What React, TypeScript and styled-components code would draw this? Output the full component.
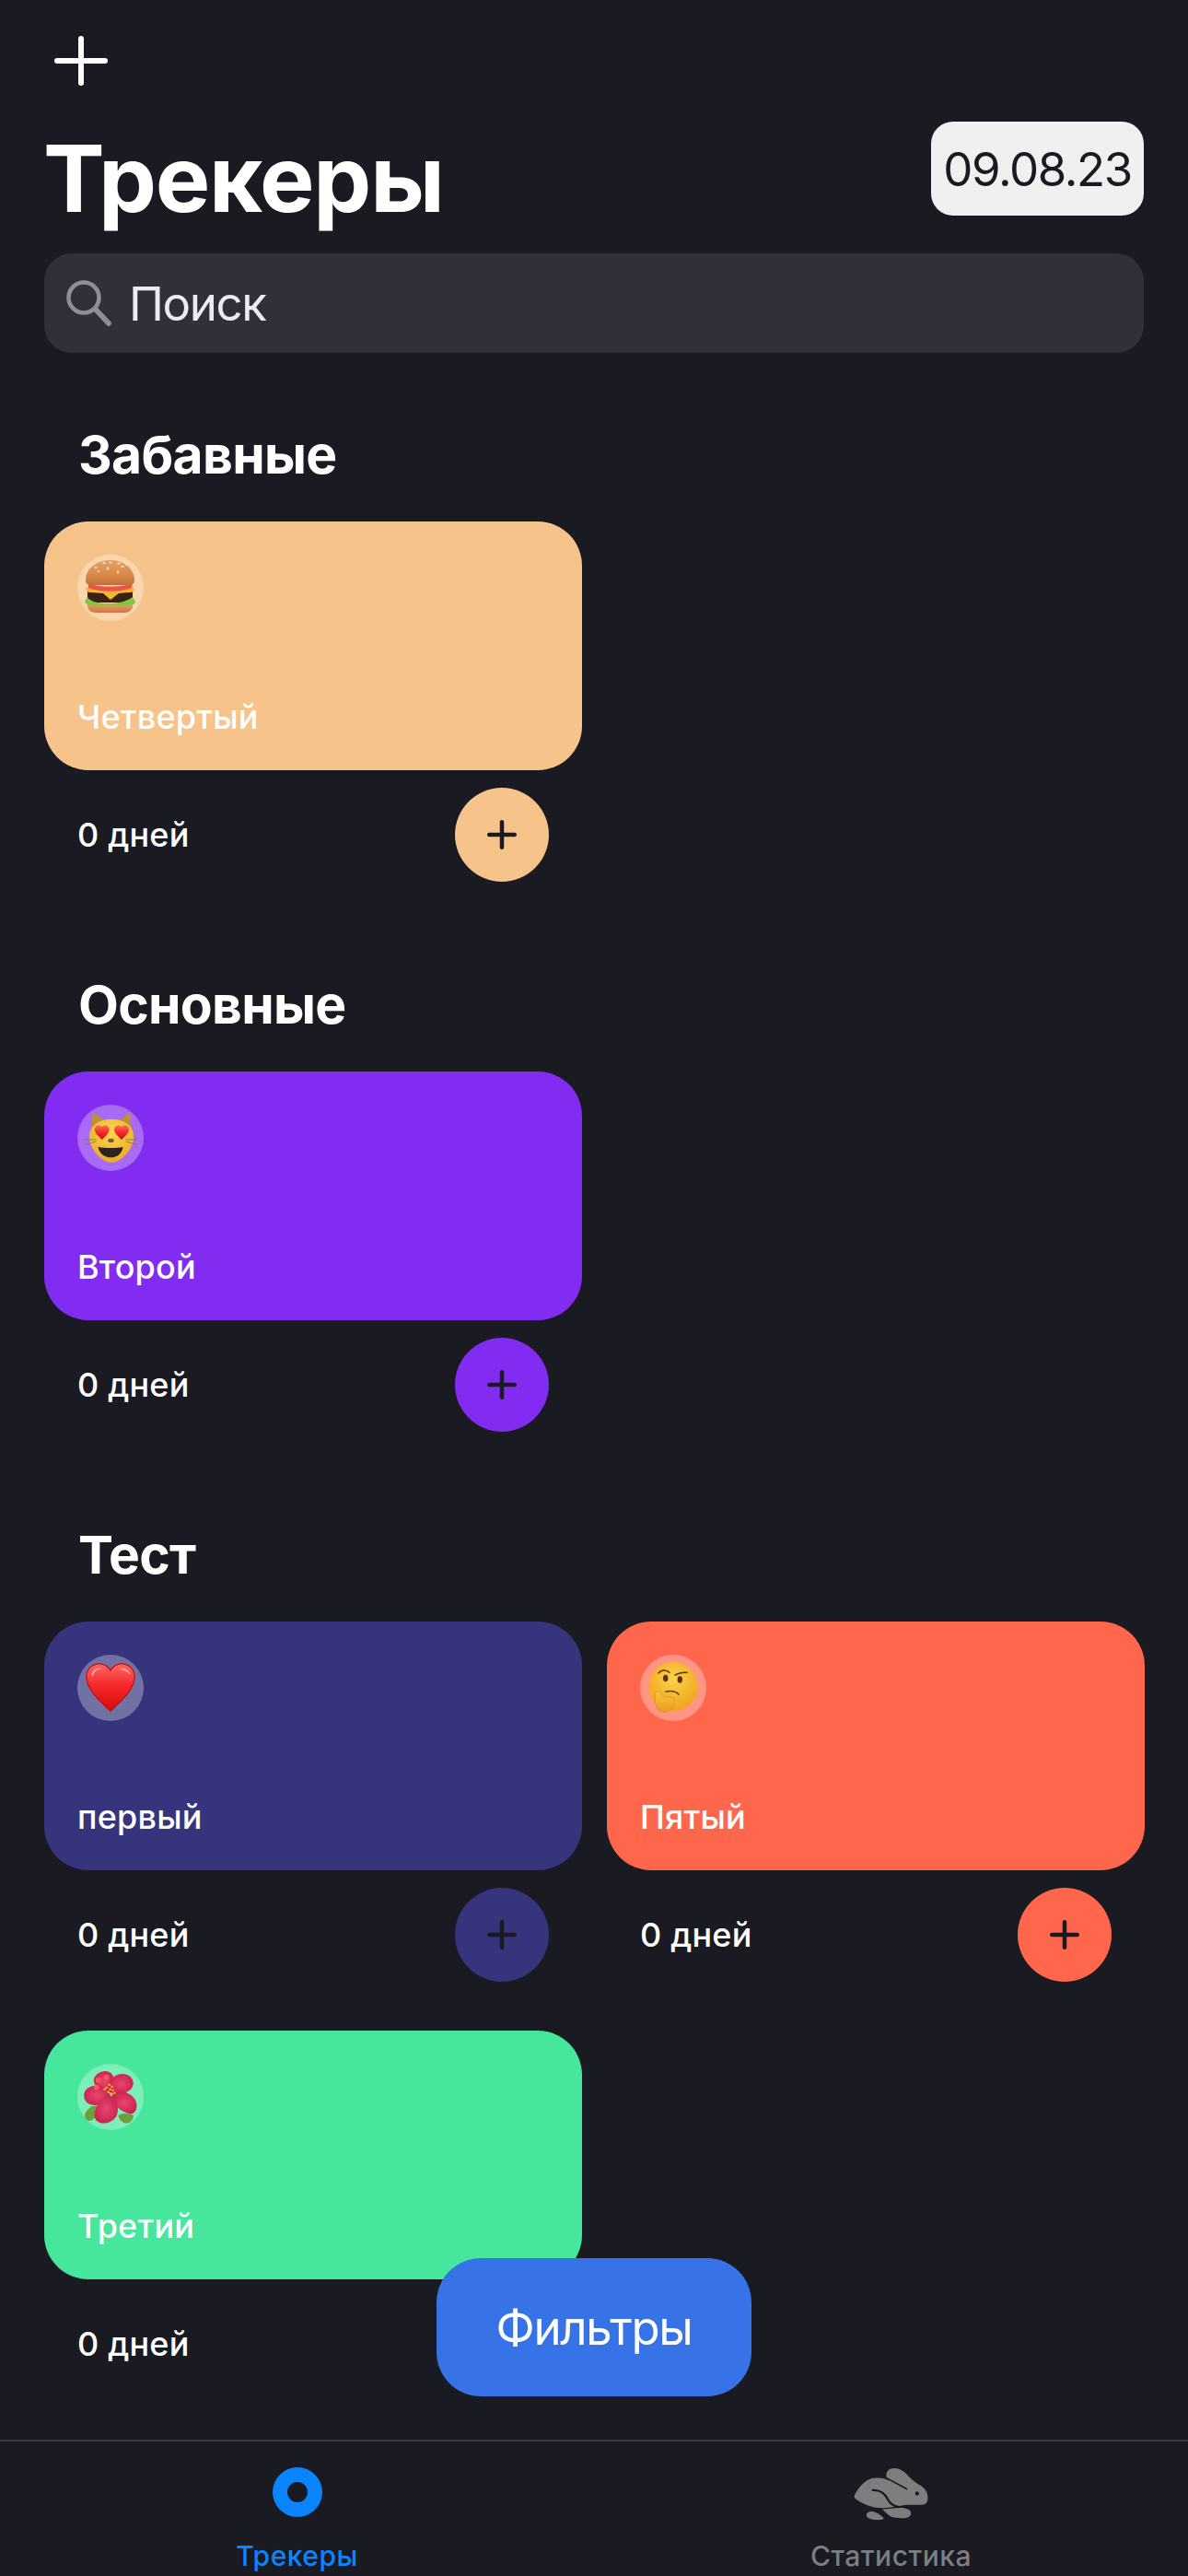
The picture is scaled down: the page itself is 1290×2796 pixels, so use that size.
import React from "react";
import styled, { createGlobalStyle } from "styled-components";

const Global = createGlobalStyle`
  html, body { margin: 0; padding: 0; background: #1a1b22; }
  * { box-sizing: border-box; }
`;

const Page = styled.div`
  position: relative;
  width: 1290px;
  height: 2796px;
  overflow: hidden;
  display: flex;
  flex-direction: column;
  background: #1a1b22;
  font-family: Inter, "Noto Sans", sans-serif;
  color: #fff;
`;
const Header = styled.header`
  display: flex;
  flex-direction: column;
  padding: 39px 48px 0;
`;
const AddButton = styled.button`
  display: block;
  width: 58px;
  height: 54px;
  margin-left: 11px;
  padding: 0;
  border: 0;
  background: none;
  svg { display: block; }
`;
const TitleRow = styled.div`
  display: flex;
  justify-content: space-between;
  align-items: flex-start;
  margin-top: 39px;
`;
const Title = styled.h1`
  margin: 0 0 0 -1px;
  font-size: 100px;
  line-height: 124px;
  font-weight: 700;
  letter-spacing: -1.2px;
`;
const DatePill = styled.div`
  width: 231px;
  height: 102px;
  border-radius: 24px;
  background: #f0f0f0;
  color: #1a1b22;
  font-size: 51px;
  letter-spacing: -1.4px;
  display: flex;
  align-items: center;
  justify-content: center;
`;
const Search = styled.div`
  height: 108px;
  margin-top: 19px;
  border-radius: 30px;
  background: #30303a;
  display: flex;
  align-items: center;
  padding-left: 24px;
  gap: 18px;
  font-size: 51px;
  letter-spacing: -1.4px;
  color: #ebebf5;
  svg { display: block; flex: none; }
`;
const Main = styled.main`
  flex: 1;
  display: flex;
  flex-direction: column;
  gap: 100px;
  padding: 77px 47px 0 48px;
`;
const Section = styled.section`
  display: flex;
  flex-direction: column;
`;
const SectionTitle = styled.h2`
  margin: 0 0 38px 37px;
  font-size: 57px;
  line-height: 68px;
  font-weight: 700;
  letter-spacing: -0.7px;
`;
const Grid = styled.div`
  display: grid;
  grid-template-columns: 584px 584px;
  column-gap: 27px;
  row-gap: 53px;
`;
const Tracker = styled.article`
  display: flex;
  flex-direction: column;
`;
const Card = styled.div<{ $color: string }>`
  height: 270px;
  border-radius: 48px;
  background: ${(p) => p.$color};
  padding: 36px;
  display: flex;
  flex-direction: column;
  justify-content: space-between;
`;
const EmojiBadge = styled.div<{ $x: number; $y: number }>`
  position: relative;
  width: 72px;
  height: 72px;
  border-radius: 50%;
  background: rgba(255, 255, 255, 0.3);
  svg {
    position: absolute;
    left: ${(p) => p.$x}px;
    top: ${(p) => p.$y}px;
    display: block;
    overflow: visible;
  }
`;
const CardName = styled.div`
  font-size: 36px;
  line-height: 44px;
  font-weight: 500;
  letter-spacing: 0.2px;
`;
const Footer = styled.div`
  margin-top: 19px;
  padding: 0 36px;
  display: flex;
  align-items: center;
  justify-content: space-between;
`;
const Days = styled.div`
  font-size: 36px;
  font-weight: 500;
  letter-spacing: 0.2px;
`;
const PlusRound = styled.button<{ $color: string }>`
  width: 102px;
  height: 102px;
  padding: 0;
  border: 0;
  border-radius: 50%;
  background: ${(p) => p.$color};
  display: flex;
  align-items: center;
  justify-content: center;
  svg { display: block; }
`;
const FilterButton = styled.button`
  position: absolute;
  left: 474px;
  top: 2451px;
  width: 342px;
  height: 150px;
  border: 0;
  border-radius: 48px;
  background: #3772e7;
  color: #fff;
  font-family: inherit;
  font-size: 51px;
  letter-spacing: -1.4px;
`;
const TabBar = styled.nav`
  height: 148px;
  border-top: 2px solid #39393d;
  display: grid;
  grid-template-columns: 1fr 1fr;
  background: #1a1b22;
`;
const Tab = styled.div<{ $active?: boolean }>`
  display: flex;
  flex-direction: column;
  align-items: center;
  padding-top: 28px;
  color: ${(p) => (p.$active ? "#0a84ff" : "#7e7e7e")};
  svg { display: block; }
`;
const TabIcon = styled.div`
  height: 58px;
  display: flex;
  align-items: flex-start;
`;
const TabLabel = styled.div`
  margin-top: 20px;
  font-size: 30px;
  line-height: 36px;
  font-weight: 500;
  letter-spacing: 0.5px;
`;

const Plus = ({ size, color, w }: { size: number; color: string; w: number }) => (
  <svg width={size} height={size} viewBox={`0 0 ${size} ${size}`}>
    <path
      d={`M${size / 2} ${w / 2}V${size - w / 2}M${w / 2} ${size / 2}H${size - w / 2}`}
      stroke={color}
      strokeWidth={w}
      strokeLinecap="round"
    />
  </svg>
);

const Burger = () => (
  <svg width="55" height="57" viewBox="0 0 55 57">
    <defs>
      <linearGradient id="bun" x1="0" y1="0" x2="0" y2="1">
        <stop offset="0" stopColor="#e4a267" />
        <stop offset="0.55" stopColor="#dc8b4b" />
        <stop offset="1" stopColor="#c27039" />
      </linearGradient>
      <linearGradient id="bunb" x1="0" y1="0" x2="0" y2="1">
        <stop offset="0" stopColor="#eaa066" />
        <stop offset="1" stopColor="#cc7843" />
      </linearGradient>
    </defs>
    <path d="M3 47 L52 47 C53 53 49 57 43 57 L12 57 C6 57 2 53 3 47Z" fill="url(#bunb)" />
    <path d="M3 31 L52 31 L52 46 L3 46Z" fill="#3c2016" />
    <path d="M1 30 C14 28 41 28 54 30 C54 34 52 35 48 35 L37 36 L28 43 L20 36 L7 35 C3 35 1 33 1 30Z" fill="#f6b62f" />
    <path d="M4 25 C15 30 40 30 52 25 L51 30 C40 35 15 35 4 30Z" fill="#ea5350" />
    <path d="M0 45 L3 40 C5 44 12 46 20 47 C30 48 44 46 52 40 L55 45 C54 48 52 49 49 48 C47 50 44 50 42 48 C40 50 37 50 35 48 C33 50 30 50 28 48 C26 50 23 50 21 48 C19 50 16 50 14 48 C12 50 9 50 7 48 C4 49 1 48 0 45Z" fill="#80c93f" />
    <path d="M1 22 C1 8 14 0 28 0 C41 0 54 8 54 22 C54 26 51 27 48 27 L7 27 C4 27 1 26 1 22Z" fill="url(#bun)" />
    <g fill="#f3e3c5">
      <ellipse cx="12" cy="8" rx="1.8" ry="1" />
      <ellipse cx="21" cy="3" rx="1.8" ry="1" />
      <ellipse cx="28" cy="2.5" rx="1.6" ry="1" />
      <ellipse cx="37" cy="3.5" rx="1.8" ry="1" />
      <ellipse cx="25" cy="9" rx="1.1" ry="1.8" />
      <ellipse cx="36" cy="13" rx="1.1" ry="1.8" />
      <ellipse cx="41" cy="7" rx="1.8" ry="1" />
      <ellipse cx="45" cy="4.5" rx="1.2" ry="0.9" />
      <ellipse cx="15" cy="12" rx="1.2" ry="0.9" />
    </g>
  </svg>
);

const Heart = ({ x = 0, y = 0, s = 1, id }: { x?: number; y?: number; s?: number; id: string }) => (
  <g transform={`translate(${x} ${y}) scale(${s})`}>
    <defs>
      <linearGradient id={id} x1="0" y1="0" x2="0" y2="1">
        <stop offset="0" stopColor="#ff6a66" />
        <stop offset="0.45" stopColor="#f52a2a" />
        <stop offset="1" stopColor="#d90a0a" />
      </linearGradient>
    </defs>
    <path d="M30 57 C20 47 2 33 2 17 C2 8 9 2 17 2 C23 2 27 5 30 10 C33 5 37 2 43 2 C51 2 58 8 58 17 C58 33 40 47 30 57Z" fill={`url(#${id})`} stroke="#c70808" strokeWidth="1.2" />
  </g>
);

const HeartEmoji = () => (
  <svg width="56" height="56" viewBox="0 0 60 60">
    <Heart id="bigheart" />
    <path d="M8 14 C10 8 16 6 20 8 C14 8 11 11 9 17Z" fill="#ffc4c0" opacity="0.8" />
    <path d="M40 8 C46 6 52 9 53 15 C50 11 46 9 40 8Z" fill="#ffc4c0" opacity="0.8" />
  </svg>
);

const Cat = () => (
  <svg width="58" height="56" viewBox="0 0 60 58">
    <defs>
      <radialGradient id="catf" cx="0.5" cy="0.3" r="0.8">
        <stop offset="0" stopColor="#fbd750" />
        <stop offset="1" stopColor="#e8a31f" />
      </radialGradient>
    </defs>
    <path d="M9 0 L23 10 L38 10 L51 0 L53 26 L7 26Z" fill="#bf9136" />
    <path d="M5 28 C5 15 16 8 30 8 C44 8 55 15 55 28 C55 42 40 57 30 57 C20 57 5 42 5 28Z" fill="url(#catf)" />
    <Heart id="cateye1" x={11} y={15} s={0.28} />
    <Heart id="cateye2" x={33} y={15} s={0.28} />
    <ellipse cx="29.5" cy="32" rx="3.4" ry="2.3" fill="#7a5a3a" />
    <path d="M15 39 C23 41 36 41 43 39 C42 47 36 51 29.5 51 C23 51 16 47 15 39Z" fill="#2a2320" />
    <path d="M0 37 L13 33 M0 31 L13 31 M46 31 L59 31 M46 33 L59 37" stroke="#8d7132" strokeWidth="0.8" />
  </svg>
);

const Thinking = () => (
  <svg width="54" height="55" viewBox="0 0 54 55">
    <defs>
      <radialGradient id="thf" cx="0.5" cy="0.35" r="0.75">
        <stop offset="0" stopColor="#fcd24a" />
        <stop offset="1" stopColor="#ee9c15" />
      </radialGradient>
      <linearGradient id="thh" x1="0" y1="0" x2="0" y2="1">
        <stop offset="0" stopColor="#fbc43f" />
        <stop offset="1" stopColor="#ec9a1f" />
      </linearGradient>
    </defs>
    <circle cx="27" cy="26.5" r="26.5" fill="url(#thf)" />
    <path d="M11 12 C14 8 20 8 23 11.5" stroke="#5a3210" strokeWidth="1.5" fill="none" strokeLinecap="round" />
    <path d="M29 14 C33 12 38 11 42 11.5" stroke="#5a3210" strokeWidth="1.5" fill="none" strokeLinecap="round" />
    <ellipse cx="18.7" cy="17.5" rx="2.7" ry="3.8" fill="#5a3210" />
    <ellipse cx="34.3" cy="19" rx="2.7" ry="3.8" fill="#5a3210" />
    <path d="M19 32 C24 31 30 32 33 35" stroke="#6a3c12" strokeWidth="1.7" fill="none" strokeLinecap="round" />
    <path d="M8 33 C10 31 13 32 14 35 C15 38 19 37 25 38 C30 39 29 42 27 43 C29 44 28 47 26 47.5 C27 49 26 51 24 51.5 C21 55 14 55 11 52 C7 47 6 38 8 33Z" fill="url(#thh)" stroke="#d98a17" strokeWidth="0.7" />
  </svg>
);

const Hibiscus = () => (
  <svg width="59" height="59" viewBox="0 0 60 60">
    <defs>
      <radialGradient id="pet" cx="0.5" cy="0.5" r="0.62">
        <stop offset="0" stopColor="#e9466f" />
        <stop offset="1" stopColor="#c51d4c" />
      </radialGradient>
    </defs>
    <path d="M1 50 C3 42 10 38 15 40 C16 50 10 56 6 56 C3 55 1 53 1 50Z" fill="#6ea03a" />
    <path d="M38 50 C44 46 52 48 55 50 C54 56 50 60 44 58 C41 56 39 54 38 50Z" fill="#6ea03a" />
    <path d="M11 10 C13 3 22 -1 28 2 C34 5 35 14 31 24 C24 26 10 20 11 10Z" fill="url(#pet)" />
    <path d="M28 14 C31 6 40 2 48 5 C56 9 56 16 52 21 C46 26 36 28 28 24Z" fill="url(#pet)" />
    <path d="M27 22 C20 16 8 15 2 22 C-2 28 1 36 8 38 C16 41 26 34 29 27Z" fill="url(#pet)" />
    <path d="M31 26 C40 21 52 24 57 33 C61 42 56 50 50 48 C41 46 31 38 31 26Z" fill="url(#pet)" />
    <path d="M28 27 C35 31 39 39 37 48 C35 56 25 60 18 58 C12 56 10 50 13 43 C16 35 22 29 28 27Z" fill="url(#pet)" />
    <circle cx="16" cy="11" r="3" fill="#f65a54" />
    <circle cx="25" cy="8" r="3" fill="#f65a54" />
    <circle cx="14" cy="19" r="3" fill="#f65a54" />
    <g fill="#f4c21a">
      <rect x="24" y="18" width="2.2" height="2.2" />
      <rect x="27" y="15" width="2.2" height="2.2" />
      <rect x="30" y="17" width="2.2" height="2.2" />
      <rect x="28" y="20" width="2.2" height="2.2" />
      <rect x="22" y="20" width="2.2" height="2.2" />
      <rect x="31" y="21" width="2.2" height="2.2" />
      <rect x="26" y="23" width="2.2" height="2.2" />
      <rect x="30" y="25" width="2.2" height="2.2" />
      <rect x="33" y="24" width="2.2" height="2.2" />
    </g>
  </svg>
);

const SearchIcon = () => (
  <svg width="50" height="50" viewBox="0 0 50 50" fill="none" stroke="#8e8e93">
    <circle cx="19" cy="19" r="16.5" strokeWidth="4.6" />
    <path d="M32 32 L46 47" strokeWidth="5.6" strokeLinecap="round" />
  </svg>
);

const TrackersIcon = () => (
  <svg width="54" height="54" viewBox="0 0 54 54">
    <path fillRule="evenodd" fill="#0a84ff" d="M27 0a27 27 0 1 0 0 54a27 27 0 1 0 0-54Zm0 16a11 11 0 1 1 0 22a11 11 0 1 1 0-22Z" />
  </svg>
);

const RabbitIcon = () => (
  <svg width="81" height="58" viewBox="143 113 243 175">
    <path
      fill="#7e7e7e"
      d="M145 205 C155 185 180 148 215 148 C235 147 245 150 258 158 C248 148 246 134 254 124 C264 112 292 112 312 132 C330 152 345 164 360 172 C378 182 386 198 385 216 C384 232 374 237 360 236 L318 236 C306 236 296 240 286 241 C270 243 240 248 222 246 C190 242 165 228 150 218 C145 214 143 210 145 205Z"
    />
    <path fill="#7e7e7e" d="M236 250 C254 248 272 248 290 246 C312 244 330 252 330 264 C330 276 316 281 300 280 C280 279 264 278 254 268 C248 262 242 256 236 250Z" />
    <path fill="#7e7e7e" d="M196 258 C210 256 222 262 240 278 C243 284 230 286 218 285 C202 285 184 280 184 270 C184 263 190 259 196 258Z" />
    <path d="M205 188 C232 186 246 202 254 218 C260 230 270 240 290 243" stroke="#1a1b22" strokeWidth="7" strokeLinecap="round" fill="none" />
    <path d="M244 145 L316 184" stroke="#1a1b22" strokeWidth="5" strokeLinecap="round" />
    <circle cx="350" cy="199" r="6.5" fill="#1a1b22" />
  </svg>
);

type T = { name: string; color: string; emoji: React.ReactNode; x: number; y: number };

const sections: { title: string; items: T[] }[] = [
  { title: "Забавные", items: [{ name: "Четвертый", color: "#f6c48b", emoji: <Burger />, x: 8, y: 6 }] },
  { title: "Основные", items: [{ name: "Второй", color: "#832cf1", emoji: <Cat />, x: 8, y: 8 }] },
  {
    title: "Тест",
    items: [
      { name: "первый", color: "#35347c", emoji: <HeartEmoji />, x: 8, y: 8 },
      { name: "Пятый", color: "#ff674d", emoji: <Thinking />, x: 9, y: 8 },
      { name: "Третий", color: "#46e69d", emoji: <Hibiscus />, x: 7, y: 7 },
    ],
  },
];

export default function App() {
  return (
    <Page>
      <Global />
      <Header>
        <AddButton aria-label="add">
          <svg width="58" height="54" viewBox="0 0 58 54">
            <path d="M29 3V51M3 27H55" stroke="#fff" strokeWidth="6" strokeLinecap="round" />
          </svg>
        </AddButton>
        <TitleRow>
          <Title>Трекеры</Title>
          <DatePill>09.08.23</DatePill>
        </TitleRow>
        <Search>
          <SearchIcon />
          <span>Поиск</span>
        </Search>
      </Header>
      <Main>
        {sections.map((s) => (
          <Section key={s.title}>
            <SectionTitle>{s.title}</SectionTitle>
            <Grid>
              {s.items.map((t) => (
                <Tracker key={t.name}>
                  <Card $color={t.color}>
                    <EmojiBadge $x={t.x} $y={t.y}>{t.emoji}</EmojiBadge>
                    <CardName>{t.name}</CardName>
                  </Card>
                  <Footer>
                    <Days>0 дней</Days>
                    <PlusRound $color={t.color}>
                      <Plus size={32} color="#1a1b22" w={4.5} />
                    </PlusRound>
                  </Footer>
                </Tracker>
              ))}
            </Grid>
          </Section>
        ))}
      </Main>
      <TabBar>
        <Tab $active>
          <TabIcon><TrackersIcon /></TabIcon>
          <TabLabel>Трекеры</TabLabel>
        </Tab>
        <Tab>
          <TabIcon><RabbitIcon /></TabIcon>
          <TabLabel>Статистика</TabLabel>
        </Tab>
      </TabBar>
      <FilterButton>Фильтры</FilterButton>
    </Page>
  );
}
